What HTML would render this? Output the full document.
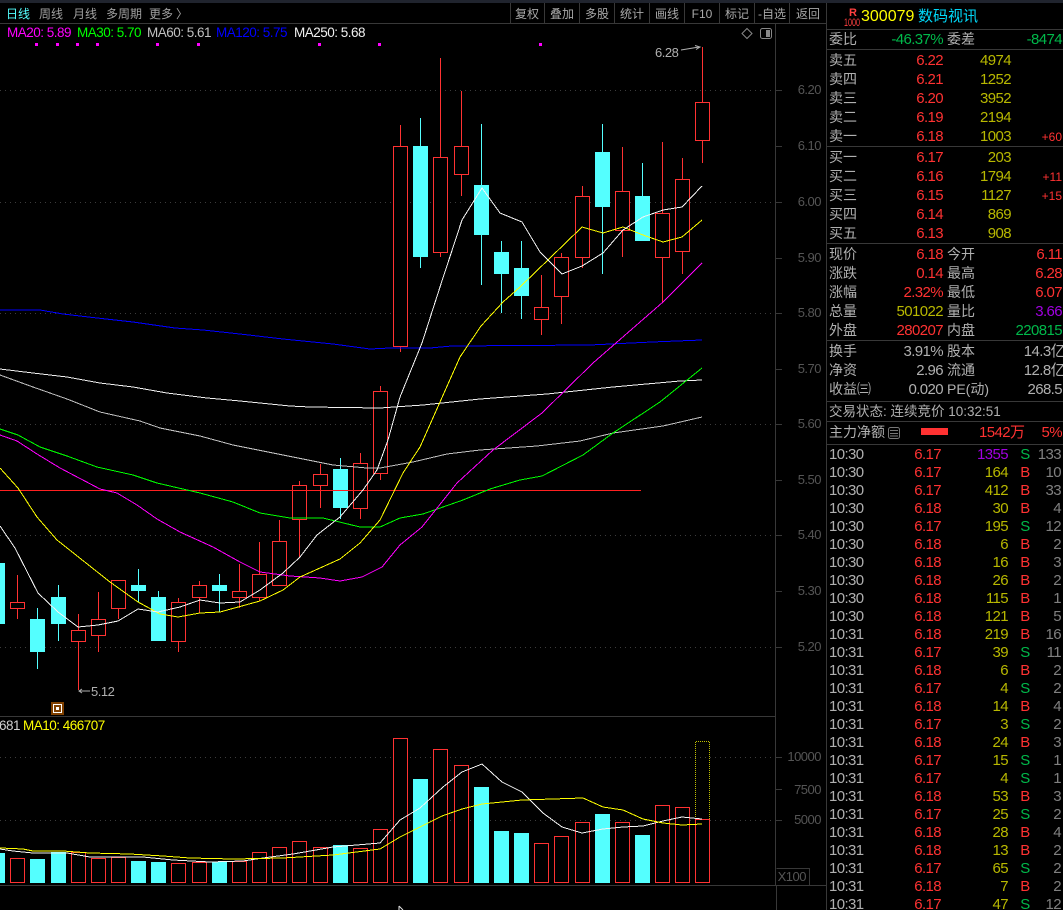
<!DOCTYPE html>
<html><head><meta charset="utf-8"><style>
html,body{margin:0;padding:0;background:#000;width:1063px;height:910px;overflow:hidden}
svg{display:block}
text{font-family:"Liberation Sans","Noto Sans CJK SC",sans-serif;font-size:14px}
.g{fill:#b0b0b0}.r{fill:#ff3232}.y{fill:#b8b800}.n{fill:#00b84a}.p{fill:#a000e0}
.e{text-anchor:end}
.r text,.y text,.n text,.p text,.e text,.t text,text.r,text.y,text.n,text.p,text.e{font-size:15px;letter-spacing:-.6px}
.ax text{font-size:13px;letter-spacing:-.5px;fill:#555;text-anchor:end}
.btn text{font-size:12px;fill:#a8a8a8;text-anchor:middle}
.nav text{font-size:12px;fill:#a0a0a0}
.ma text{font-size:13.5px;letter-spacing:-.5px}
.ln polyline{fill:none;stroke-width:1;shape-rendering:crispEdges}
</style></head><body>
<svg width="1063" height="910" viewBox="0 0 1063 910" xmlns="http://www.w3.org/2000/svg">
<rect width="1063" height="910" fill="#000"/>
<rect width="1063" height="3" fill="#20242e"/>

<!-- frame lines -->
<g stroke="#383838" shape-rendering="crispEdges" fill="none">
<path d="M0 23.5H826M0 716.5H776M0 885.5H826"/>
<path d="M775.5 23V885M776.5 885V910M826.5 3V910"/>
<path d="M510.5 3V23M544.5 3V23M579.5 3V23M614.5 3V23M649.5 3V23M684.5 3V23M719.5 3V23M754.5 3V23M789.5 3V23"/>
<path d="M827 29.5H1063M827 49.5H1063M827 146.5H1063M827 243.5H1063M827 340.5H1063M827 401.5H1063M827 421.5H1063M827 444.5H1063"/>
<path d="M776.5 868.5H809.5V885"/>
<path d="M776 90.5H782M776 146.5H782M776 202.5H782M776 258.5H782M776 313.5H782M776 369.5H782M776 424.5H782M776 480.5H782M776 535.5H782M776 591.5H782M776 647.5H782M776 757.5H782M776 789.5H782M776 820.5H782"/>
</g>

<!-- grid -->
<g stroke="#3c3c3c" stroke-dasharray="1 4" shape-rendering="crispEdges">
<path d="M0 90.5H775M0 202.5H775M0 313.5H775M0 424.5H775M0 535.5H775M0 647.5H775M0 757.5H775M0 820.5H775"/>
</g>

<!-- nav -->
<g class="nav">
<text x="6" y="18" style="fill:#54ffff">日线</text>
<text x="39" y="18">周线</text>
<text x="73" y="18">月线</text>
<text x="106" y="18">多周期</text>
<text x="149" y="18">更多</text>
<text x="176" y="18">〉</text>
</g>
<g class="btn">
<text x="527" y="18">复权</text>
<text x="562" y="18">叠加</text>
<text x="597" y="18">多股</text>
<text x="632" y="18">统计</text>
<text x="667" y="18">画线</text>
<text x="702" y="18">F10</text>
<text x="737" y="18">标记</text>
<text x="772" y="18">-自选</text>
<text x="808" y="18">返回</text>
</g>

<!-- MA legend -->
<g class="ma">
<text x="7" y="37" fill="#ff00ff">MA20: 5.89</text>
<text x="77" y="37" fill="#00ff00">MA30: 5.70</text>
<text x="147" y="37" fill="#c0c0c0">MA60: 5.61</text>
<text x="216" y="37" fill="#0000ff">MA120: 5.75</text>
<text x="294" y="37" fill="#f0f0f0">MA250: 5.68</text>
<text x="-1" y="730" fill="#d0d0d0">681</text>
<text x="23" y="730" fill="#ffff00">MA10: 466707</text>
</g>
<path d="M35 43h3v3h-3zM56 43h3v3h-3zM76 43h3v3h-3zM96 43h3v3h-3zM156 43h3v3h-3zM197 43h3v3h-3zM318 43h3v3h-3zM378 43h3v3h-3zM539 43h3v3h-3z" fill="#ff00ff"/>

<!-- corner icons -->
<path d="M747 28.5L752 33.5L747 38.5L742 33.5Z" fill="none" stroke="#888"/>
<rect x="760.5" y="28.5" width="11" height="10" rx="2" fill="none" stroke="#888"/>
<rect x="766" y="30" width="4" height="7" fill="#888"/>

<!-- axis -->
<g class="ax">
<text x="821" y="94">6.20</text><text x="821" y="150">6.10</text><text x="821" y="206">6.00</text><text x="821" y="262">5.90</text><text x="821" y="317">5.80</text><text x="821" y="373">5.70</text><text x="821" y="428">5.60</text><text x="821" y="484">5.50</text><text x="821" y="539">5.40</text><text x="821" y="595">5.30</text><text x="821" y="651">5.20</text>
<text x="821" y="761">10000</text><text x="821" y="794">7500</text><text x="821" y="824">5000</text>
<text x="806" y="881">X100</text>
</g>

<!-- wicks -->
<g shape-rendering="crispEdges" fill="none">
<path stroke="#ff3232" d="M17.5 575V619M78.5 614V690M98.5 592V652M118.5 580V619M178.5 598V652M199.5 581V613M239.5 564V608M259.5 542V601M279.5 520V586M299.5 481V557M320.5 464V508M360.5 453V519M380.5 386V480M400.5 125V352M440.5 58V257M461.5 91V196M541.5 275V335M561.5 253V324M582.5 186V268M622.5 147V257M662.5 142V302M682.5 158V274M702.5 47V163"/>
<path stroke="#54ffff" d="M37.5 608V669M58.5 585V641M138.5 569V602M158.5 591V600M219.5 574V612M340.5 458V519M420.5 118V268M481.5 124V285M501.5 241V313M521.5 241V319M602.5 124V274M642.5 163V241"/>
</g>
<!-- candle bodies -->
<g fill="#54ffff" shape-rendering="crispEdges">
<rect x="-1" y="563" width="6" height="61"/>
<rect x="30" y="619" width="15" height="33"/>
<rect x="51" y="597" width="15" height="27"/>
<rect x="131" y="585" width="15" height="6"/>
<rect x="151" y="597" width="15" height="44"/>
<rect x="212" y="585" width="15" height="6"/>
<rect x="333" y="469" width="15" height="39"/>
<rect x="413" y="146" width="15" height="111"/>
<rect x="474" y="185" width="15" height="50"/>
<rect x="494" y="252" width="15" height="22"/>
<rect x="514" y="268" width="15" height="28"/>
<rect x="595" y="152" width="15" height="55"/>
<rect x="635" y="196" width="15" height="45"/>
</g>
<g fill="#000" stroke="#ff3232" shape-rendering="crispEdges">
<rect x="10.5" y="602.5" width="14" height="6"/>
<rect x="71.5" y="630.5" width="14" height="11"/>
<rect x="91.5" y="619.5" width="14" height="16"/>
<rect x="111.5" y="580.5" width="14" height="28"/>
<rect x="171.5" y="602.5" width="14" height="39"/>
<rect x="192.5" y="585.5" width="14" height="12"/>
<rect x="232.5" y="591.5" width="14" height="6"/>
<rect x="252.5" y="574.5" width="14" height="23"/>
<rect x="272.5" y="541.5" width="14" height="44"/>
<rect x="292.5" y="485.5" width="14" height="34"/>
<rect x="313.5" y="474.5" width="14" height="11"/>
<rect x="353.5" y="463.5" width="14" height="45"/>
<rect x="373.5" y="391.5" width="14" height="82"/>
<rect x="393.5" y="146.5" width="14" height="200"/>
<rect x="433.5" y="157.5" width="14" height="95"/>
<rect x="454.5" y="146.5" width="14" height="28"/>
<rect x="534.5" y="307.5" width="14" height="12"/>
<rect x="554.5" y="257.5" width="14" height="39"/>
<rect x="575.5" y="196.5" width="14" height="61"/>
<rect x="615.5" y="191.5" width="14" height="39"/>
<rect x="655.5" y="213.5" width="14" height="44"/>
<rect x="675.5" y="179.5" width="14" height="72"/>
<rect x="695.5" y="102.5" width="14" height="38"/>
</g>

<!-- red horizontal -->
<path d="M0 490.5H641" stroke="#ff2020" shape-rendering="crispEdges"/>

<!-- MA lines -->
<g class="ln">
<polyline stroke="#0000ff" points="0,310 40,310 63,314 97,318 133,322 175,328 203,330 240,334 283,339 333,344 370,349 390,348 430,348 452,346 590,345 652,342 702,340"/>
<polyline stroke="#f0f0f0" points="0,369 33,373 67,377 100,383 133,387 167,393 207,398 240,401 290,406 310,407 380,408 423,405 480,399 547,394 613,387 680,381 702,380"/>
<polyline stroke="#c0c0c0" points="0,375 33,387 67,399 100,412 140,421 160,428 200,436 233,445 283,455 333,465 367,468 380,468 413,462 447,454 480,450 537,446 580,441 613,433 663,426 702,417"/>
<polyline stroke="#00ff00" points="0,429 18,435 40,447 67,456 97,467 133,475 157,483 200,493 233,502 260,513 290,518 323,518 360,527 380,527 400,518 423,514 463,500 490,489 520,480 542,476 583,455 613,433 660,402 702,368"/>
<polyline stroke="#ff00ff" points="0,435 17,441 37,454 60,468 100,489 117,493 137,505 157,519 180,532 213,547 240,562 260,572 290,576 320,578 340,581 362,577 382,567 400,545 422,527 457,483 493,450 542,413 593,363 663,302 702,263"/>
<polyline stroke="#ffff00" points="0,468 18,488 37,517 57,540 110,582 138,602 160,614 178,617 200,613 220,612 260,601 283,590 300,577 340,559 360,543 380,520 403,473 420,447 460,357 481,326 503,302 520,287 550,258 582,227 603,233 623,227 643,235 663,242 682,237 702,220"/>
<polyline stroke="#f4f4f4" points="0,526 15,548 38,593 58,612 78,627 98,625 118,621 138,609 158,612 180,607 200,600 220,603 240,602 260,590 283,573 300,557 317,535 340,517 363,490 377,470 388,440 400,397 422,343 440,287 462,220 482,188 500,213 522,222 540,252 562,274 582,266 603,253 623,230 643,217 663,210 682,207 702,186"/>
</g>

<!-- annotations -->
<text x="655" y="57" style="font-size:13px;letter-spacing:-.5px;fill:#b0b0b0">6.28</text>
<path d="M681 50L699 47M695 45.5L700 47L696 49.5" fill="none" stroke="#b0b0b0"/>
<text x="91" y="696" style="font-size:13px;letter-spacing:-.5px;fill:#b0b0b0">5.12</text>
<path d="M79 691H90M82 689L79 691L82 693" fill="none" stroke="#b0b0b0"/>
<rect x="51" y="702" width="13" height="13" fill="#804000"/>
<rect x="53" y="704" width="9" height="9" fill="#fff"/>
<rect x="54" y="705" width="7" height="7" fill="#804000"/>
<rect x="56" y="707" width="3" height="3" fill="#fff"/>

<!-- volume -->
<g fill="#54ffff" shape-rendering="crispEdges">
<rect x="-1" y="853" width="6" height="30"/>
<rect x="30" y="859" width="15" height="24"/>
<rect x="51" y="852" width="15" height="31"/>
<rect x="131" y="861" width="15" height="22"/>
<rect x="151" y="862" width="15" height="21"/>
<rect x="212" y="862" width="15" height="21"/>
<rect x="333" y="845" width="15" height="38"/>
<rect x="413" y="779" width="15" height="104"/>
<rect x="474" y="787" width="15" height="96"/>
<rect x="494" y="831" width="15" height="52"/>
<rect x="514" y="833" width="15" height="50"/>
<rect x="595" y="814" width="15" height="69"/>
<rect x="635" y="835" width="15" height="48"/>
</g>
<g fill="#000" stroke="#ff3232" shape-rendering="crispEdges">
<rect x="10.5" y="858.5" width="14" height="24"/>
<rect x="71.5" y="852.5" width="14" height="30"/>
<rect x="91.5" y="858.5" width="14" height="24"/>
<rect x="111.5" y="857.5" width="14" height="25"/>
<rect x="171.5" y="863.5" width="14" height="19"/>
<rect x="192.5" y="862.5" width="14" height="20"/>
<rect x="232.5" y="861.5" width="14" height="21"/>
<rect x="252.5" y="852.5" width="14" height="30"/>
<rect x="272.5" y="847.5" width="14" height="35"/>
<rect x="292.5" y="841.5" width="14" height="41"/>
<rect x="313.5" y="847.5" width="14" height="35"/>
<rect x="353.5" y="848.5" width="14" height="34"/>
<rect x="373.5" y="829.5" width="14" height="53"/>
<rect x="393.5" y="738.5" width="14" height="144"/>
<rect x="433.5" y="749.5" width="14" height="133"/>
<rect x="454.5" y="765.5" width="14" height="117"/>
<rect x="534.5" y="843.5" width="14" height="39"/>
<rect x="554.5" y="836.5" width="14" height="46"/>
<rect x="575.5" y="822.5" width="14" height="60"/>
<rect x="615.5" y="822.5" width="14" height="60"/>
<rect x="655.5" y="805.5" width="14" height="77"/>
<rect x="675.5" y="807.5" width="14" height="75"/>
<rect x="695.5" y="819.5" width="14" height="63"/>
</g>
<path d="M695.5 819V741.5H709.5V819" fill="none" stroke="#c0c000" stroke-dasharray="1 1" shape-rendering="crispEdges"/>
<g class="ln">
<polyline stroke="#f4f4f4" points="0,849 13,851 33,853 67,853 90,857 143,857 173,860 210,862 243,861 263,858 293,854 333,847 380,843 400,820 420,808 443,787 462,772 482,764 502,782 522,792 543,813 562,827 582,833 603,829 623,827 643,826 663,821 682,817 702,819"/>
<polyline stroke="#ffff00" points="0,848 23,849 33,851 63,851 90,853 130,854 163,856 190,858 233,859 283,858 333,855 380,849 400,837 420,827 442,816 462,809 482,804 502,802 522,800 583,798 603,807 623,810 643,819 663,823 682,825 702,824"/>
</g>
<path d="M399 906l0 4M399 906l4 4" stroke="#ddd" fill="none"/>

<!-- right panel header -->
<text x="849" y="16" style="font-size:11px;font-weight:bold;fill:#ff4040">R</text>
<text x="844" y="26" textLength="16" lengthAdjust="spacingAndGlyphs" style="font-size:11px;fill:#ff4040">1000</text>
<text x="861" y="21" style="font-size:16px;fill:#ffff00">300079</text>
<text x="918" y="21" style="font-size:15px;fill:#00d8f8">数码视讯</text>

<!-- labels -->
<g class="g">
<text x="829" y="44">委比</text><text x="947" y="44">委差</text>
<text x="829" y="65">卖五</text><text x="829" y="84">卖四</text><text x="829" y="103">卖三</text><text x="829" y="122">卖二</text><text x="829" y="141">卖一</text>
<text x="829" y="162">买一</text><text x="829" y="181">买二</text><text x="829" y="200">买三</text><text x="829" y="219">买四</text><text x="829" y="238">买五</text>
<text x="829" y="259">现价</text><text x="947" y="259">今开</text>
<text x="829" y="278">涨跌</text><text x="947" y="278">最高</text>
<text x="829" y="297">涨幅</text><text x="947" y="297">最低</text>
<text x="829" y="316">总量</text><text x="947" y="316">量比</text>
<text x="829" y="335">外盘</text><text x="947" y="335">内盘</text>
<text x="829" y="356">换手</text><text x="947" y="356">股本</text>
<text x="829" y="375">净资</text><text x="947" y="375">流通</text>
<text x="829" y="394">收益㈢</text><text x="947" y="394">PE(动)</text>
<text x="829" y="416" style="font-size:13.5px">交易状态: 连续竞价 10:32:51</text>
<text x="829" y="437">主力净额</text>
</g>
<!-- icon near 主力净额 -->
<rect x="888.5" y="427.5" width="11" height="11" rx="2" fill="none" stroke="#777"/>
<path d="M890 430.5H898M890 433.5H898M890 436H898" stroke="#777" shape-rendering="crispEdges"/>
<rect x="921" y="428" width="27" height="7" fill="#ff3232"/>
<text x="979" y="437" class="r">1542万</text>
<text x="1062" y="437" class="r e">5%</text>

<!-- order book -->
<text x="943" y="44" class="n e">-46.37%</text><text x="1062" y="44" class="n e">-8474</text>
<g class="r e">
<text x="943" y="65">6.22</text><text x="943" y="84">6.21</text><text x="943" y="103">6.20</text><text x="943" y="122">6.19</text><text x="943" y="141">6.18</text>
<text x="943" y="162">6.17</text><text x="943" y="181">6.16</text><text x="943" y="200">6.15</text><text x="943" y="219">6.14</text><text x="943" y="238">6.13</text>
<text x="943" y="259">6.18</text><text x="1062" y="259">6.11</text>
<text x="943" y="278">0.14</text><text x="1062" y="278">6.28</text>
<text x="943" y="297">2.32%</text><text x="1062" y="297">6.07</text>
<text x="943" y="335">280207</text>
<text x="1062" y="141" style="font-size:12px;letter-spacing:0">+60</text>
<text x="1062" y="181" style="font-size:12px;letter-spacing:0">+11</text>
<text x="1062" y="200" style="font-size:12px;letter-spacing:0">+15</text>
</g>
<g class="y e">
<text x="1011" y="65">4974</text><text x="1011" y="84">1252</text><text x="1011" y="103">3952</text><text x="1011" y="122">2194</text><text x="1011" y="141">1003</text>
<text x="1011" y="162">203</text><text x="1011" y="181">1794</text><text x="1011" y="200">1127</text><text x="1011" y="219">869</text><text x="1011" y="238">908</text>
<text x="943" y="316">501022</text>
</g>
<text x="1062" y="316" class="p e">3.66</text>
<text x="1062" y="335" class="n e">220815</text>
<g class="g e">
<text x="943" y="356">3.91%</text><text x="1065" y="356">14.3亿</text>
<text x="943" y="375">2.96</text><text x="1065" y="375">12.8亿</text>
<text x="943" y="394">0.020</text><text x="1062" y="394">268.5</text>
</g>

<!-- ticks: time -->
<g class="g t">
<text x="829" y="459">10:30</text><text x="829" y="477">10:30</text><text x="829" y="495">10:30</text><text x="829" y="513">10:30</text><text x="829" y="531">10:30</text><text x="829" y="549">10:30</text><text x="829" y="567">10:30</text><text x="829" y="585">10:30</text><text x="829" y="603">10:30</text><text x="829" y="621">10:30</text><text x="829" y="639">10:31</text><text x="829" y="657">10:31</text><text x="829" y="675">10:31</text><text x="829" y="693">10:31</text><text x="829" y="711">10:31</text><text x="829" y="729">10:31</text><text x="829" y="747">10:31</text><text x="829" y="765">10:31</text><text x="829" y="783">10:31</text><text x="829" y="801">10:31</text><text x="829" y="819">10:31</text><text x="829" y="837">10:31</text><text x="829" y="855">10:31</text><text x="829" y="873">10:31</text><text x="829" y="891">10:31</text><text x="829" y="909">10:31</text>
</g>
<!-- ticks: price -->
<g class="r e">
<text x="941" y="459">6.17</text><text x="941" y="477">6.17</text><text x="941" y="495">6.17</text><text x="941" y="513">6.18</text><text x="941" y="531">6.17</text><text x="941" y="549">6.18</text><text x="941" y="567">6.18</text><text x="941" y="585">6.18</text><text x="941" y="603">6.18</text><text x="941" y="621">6.18</text><text x="941" y="639">6.18</text><text x="941" y="657">6.17</text><text x="941" y="675">6.18</text><text x="941" y="693">6.17</text><text x="941" y="711">6.18</text><text x="941" y="729">6.17</text><text x="941" y="747">6.18</text><text x="941" y="765">6.17</text><text x="941" y="783">6.17</text><text x="941" y="801">6.18</text><text x="941" y="819">6.17</text><text x="941" y="837">6.18</text><text x="941" y="855">6.18</text><text x="941" y="873">6.17</text><text x="941" y="891">6.18</text><text x="941" y="909">6.17</text>
</g>
<!-- ticks: volume -->
<text x="1008" y="459" class="p e">1355</text>
<g class="y e">
<text x="1008" y="477">164</text><text x="1008" y="495">412</text><text x="1008" y="513">30</text><text x="1008" y="531">195</text><text x="1008" y="549">6</text><text x="1008" y="567">16</text><text x="1008" y="585">26</text><text x="1008" y="603">115</text><text x="1008" y="621">121</text><text x="1008" y="639">219</text><text x="1008" y="657">39</text><text x="1008" y="675">6</text><text x="1008" y="693">4</text><text x="1008" y="711">14</text><text x="1008" y="729">3</text><text x="1008" y="747">24</text><text x="1008" y="765">15</text><text x="1008" y="783">4</text><text x="1008" y="801">53</text><text x="1008" y="819">25</text><text x="1008" y="837">28</text><text x="1008" y="855">13</text><text x="1008" y="873">65</text><text x="1008" y="891">7</text><text x="1008" y="909">47</text>
</g>
<!-- ticks: B/S -->
<g class="n" style="text-anchor:middle">
<text x="1025" y="459">S</text><text x="1025" y="531">S</text><text x="1025" y="657">S</text><text x="1025" y="693">S</text><text x="1025" y="729">S</text><text x="1025" y="765">S</text><text x="1025" y="783">S</text><text x="1025" y="819">S</text><text x="1025" y="873">S</text><text x="1025" y="909">S</text>
</g>
<g class="r" style="text-anchor:middle">
<text x="1025" y="477">B</text><text x="1025" y="495">B</text><text x="1025" y="513">B</text><text x="1025" y="549">B</text><text x="1025" y="567">B</text><text x="1025" y="585">B</text><text x="1025" y="603">B</text><text x="1025" y="621">B</text><text x="1025" y="639">B</text><text x="1025" y="675">B</text><text x="1025" y="711">B</text><text x="1025" y="747">B</text><text x="1025" y="801">B</text><text x="1025" y="837">B</text><text x="1025" y="855">B</text><text x="1025" y="891">B</text>
</g>
<!-- ticks: count -->
<g class="e" fill="#808080">
<text x="1061" y="459">133</text><text x="1061" y="477">10</text><text x="1061" y="495">33</text><text x="1061" y="513">4</text><text x="1061" y="531">12</text><text x="1061" y="549">2</text><text x="1061" y="567">3</text><text x="1061" y="585">2</text><text x="1061" y="603">1</text><text x="1061" y="621">5</text><text x="1061" y="639">16</text><text x="1061" y="657">11</text><text x="1061" y="675">2</text><text x="1061" y="693">2</text><text x="1061" y="711">4</text><text x="1061" y="729">2</text><text x="1061" y="747">3</text><text x="1061" y="765">1</text><text x="1061" y="783">1</text><text x="1061" y="801">3</text><text x="1061" y="819">2</text><text x="1061" y="837">4</text><text x="1061" y="855">2</text><text x="1061" y="873">2</text><text x="1061" y="891">2</text><text x="1061" y="909">12</text>
</g>
</svg>
</body></html>
